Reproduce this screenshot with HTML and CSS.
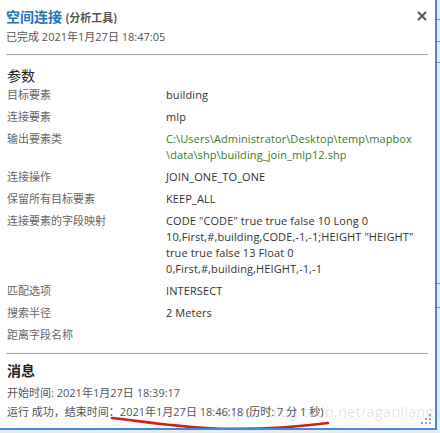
FILE: index.html
```html
<!DOCTYPE html>
<html lang="zh-CN">
<head>
    <meta charset="UTF-8">
    <title>空间连接 (分析工具)</title>
    <link rel="stylesheet" href="styles.css">
</head>
<body>
    <div class="window">
        <div class="panel">
            <div class="header">
                <div class="title-block">
                    <div class="title">空间连接 <span class="tool-type">(分析工具)</span></div>
                    <div class="status">已完成 2021年1月27日 18:47:05</div>
                </div>
                <svg class="close" width="10" height="10" viewBox="0 0 10 10">
                    <path d="M1 1 L9 9 M9 1 L1 9" stroke="#5a5a5a" stroke-width="2" fill="none"/>
                </svg>
            </div>

            <div class="divider"></div>
            <div class="section-title">参数</div>
            <div class="params">
                <div class="label">目标要素</div>
                <div class="value">building</div>
                <div class="label">连接要素</div>
                <div class="value">mlp</div>
                <div class="label">输出要素类</div>
                <div class="value path">C:\Users\Administrator\Desktop\temp\mapbox<br>\data\shp\building_join_mlp12.shp</div>
                <div class="label">连接操作</div>
                <div class="value">JOIN_ONE_TO_ONE</div>
                <div class="label">保留所有目标要素</div>
                <div class="value">KEEP_ALL</div>
                <div class="label">连接要素的字段映射</div>
                <div class="value">CODE "CODE" true true false 10 Long 0<br>10,First,#,building,CODE,-1,-1;HEIGHT "HEIGHT"<br>true true false 13 Float 0<br>0,First,#,building,HEIGHT,-1,-1</div>
                <div class="label">匹配选项</div>
                <div class="value">INTERSECT</div>
                <div class="label">搜索半径</div>
                <div class="value">2 Meters</div>
                <div class="label">距离字段名称</div>
                <div class="value"></div>
            </div>

            <div class="divider divider-msg"></div>
            <div class="section-title">消息</div>
            <div class="messages">
                <div>开始时间: 2021年1月27日 18:39:17</div>
                <div>运行 成功，结束时间：2021年1月27日 18:46:18 (历时: 7 分 1 秒)</div>
            </div>

            <div class="watermark">https://blog.csdn.net/aganliang</div>
            <svg class="scribble" width="240" height="16" viewBox="0 0 240 16">
                <path d="M2 2 C 30 5, 60 10, 95 12 C 130 14, 170 13, 218 7" stroke="#d21f1b" stroke-width="2.6" fill="none" stroke-linecap="round"/>
            </svg>
            <svg class="grip" width="11" height="11" viewBox="0 0 11 11">
                <rect x="8" y="0" width="2" height="2" fill="#a0a0a0"/>
                <rect x="4" y="4" width="2" height="2" fill="#a0a0a0"/>
                <rect x="8" y="4" width="2" height="2" fill="#a0a0a0"/>
                <rect x="0" y="8" width="2" height="2" fill="#a0a0a0"/>
                <rect x="4" y="8" width="2" height="2" fill="#a0a0a0"/>
                <rect x="8" y="8" width="2" height="2" fill="#a0a0a0"/>
            </svg>
        </div>
        <div class="strip">
            <div class="tick t1"></div>
            <div class="tick t2"></div>
            <div class="tick t3"></div>
            <div class="tick t4"></div>
            <div class="tick t5"></div>
        </div>
    </div>
</body>
</html>
```

FILE: styles.css
```css
body {
    margin: 0;
    background-color: #e7eaee;
    font-family: "Open Sans", "Noto Sans CJK SC", sans-serif;
    font-size: 11px;
    color: #333;
}

.window {
    display: flex;
    height: 433px;
}

.panel {
    position: relative;
    width: 435px;
    height: 428px;
    background-color: #fff;
    border-right: 2px solid #3c8cd6;
    border-bottom: 2px solid #3c8cd6;
    overflow: hidden;
}

.header {
    display: flex;
    justify-content: space-between;
    align-items: flex-start;
    padding: 6px 8px 0 6px;
}

.title {
    font-family: "Noto Sans CJK SC", sans-serif;
    font-size: 14px;
    line-height: 20px;
    font-weight: bold;
    color: #2274bd;
}

.tool-type {
    font-size: 11px;
    color: #555;
}

.status {
    margin-top: 2px;
    line-height: 16px;
    color: #555;
}

.close {
    margin-top: 5px;
}

.divider {
    height: 1px;
    margin: 9px 7px 0 6px;
    background-color: #a3a3a3;
}

.section-title {
    margin-top: 12px;
    padding-left: 7px;
    font-family: "Noto Sans CJK SC", sans-serif;
    font-size: 14px;
    line-height: 17px;
    color: #222;
}

.params {
    display: grid;
    grid-template-columns: 159px 1fr;
    padding-left: 7px;
}

.label, .value {
    padding: 3px 0;
    line-height: 16px;
}

.label {
    color: #666;
}

.value {
    color: #333;
    letter-spacing: 0.1px;
}

.path {
    color: #3b7a2e;
}

.divider-msg {
    margin-top: 7px;
}

.divider-msg + .section-title {
    margin-top: 8px;
    font-weight: bold;
}

.messages {
    margin-top: 4px;
    padding-left: 7px;
    line-height: 19px;
    color: #555;
}

.watermark {
    position: absolute;
    left: 216px;
    top: 401px;
    font-family: "Open Sans", sans-serif;
    font-size: 15px;
    line-height: 20px;
    color: rgba(0, 0, 0, 0.12);
    white-space: nowrap;
}

.scribble {
    position: absolute;
    left: 110px;
    top: 416px;
}

.grip {
    position: absolute;
    right: 3px;
    bottom: 3px;
}

.strip {
    position: relative;
    width: 3px;
}

.tick {
    position: absolute;
    left: 0;
    width: 3px;
    height: 1px;
    background-color: #8a8f96;
}

.t1 { top: 19px; }
.t2 { top: 41px; }
.t3 { top: 62px; }
.t4 { top: 283px; }
.t5 { top: 307px; }
```
